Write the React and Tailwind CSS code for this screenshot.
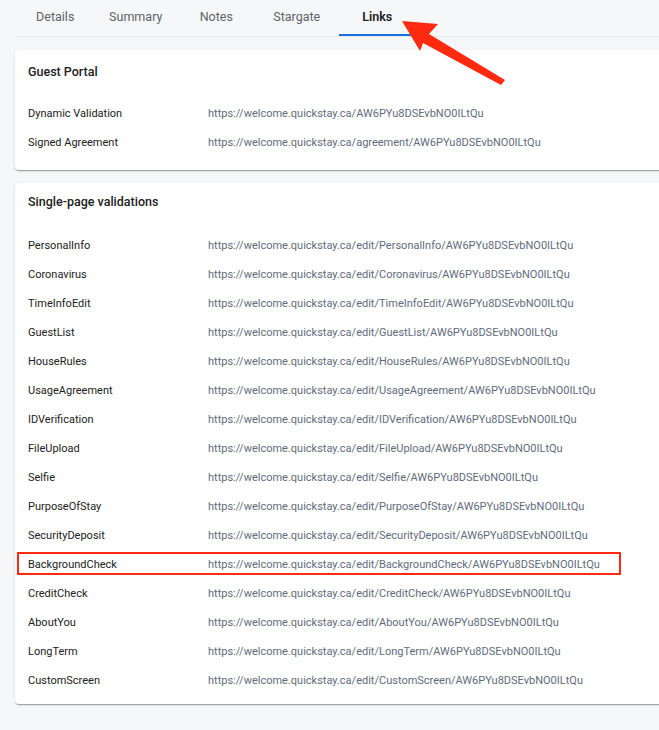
import React from "react";

const ID = "AW6PYu8DSEvbNO0ILtQu";
const BASE = "https://welcome.quickstay.ca";

const TABS = ["Details", "Summary", "Notes", "Stargate", "Links"];

const PORTAL = [
  { label: "Dynamic Validation", url: `${BASE}/${ID}` },
  { label: "Signed Agreement", url: `${BASE}/agreement/${ID}` },
];

const SCREENS = [
  "PersonalInfo",
  "Coronavirus",
  "TimeInfoEdit",
  "GuestList",
  "HouseRules",
  "UsageAgreement",
  "IDVerification",
  "FileUpload",
  "Selfie",
  "PurposeOfStay",
  "SecurityDeposit",
  "BackgroundCheck",
  "CreditCheck",
  "AboutYou",
  "LongTerm",
  "CustomScreen",
];

function Row({ label, url, marked }) {
  return (
    <div className="relative flex items-center h-[29px]">
      <div className="w-[180px] shrink-0 text-[11px] text-[#212121]">{label}</div>
      <div className="text-[11px] text-[#5f6b7c]">{url}</div>
      {marked && (
        <div className="absolute left-[-11px] top-[1px] w-[604px] h-[23px] border-[2.5px] border-[#ff2a10] pointer-events-none" />
      )}
    </div>
  );
}

function Card({ title, children, className = "" }) {
  return (
    <div
      className={`bg-white rounded-[4px] mr-[-20px] pl-[13px] shadow-[0_2px_1px_-1px_rgba(0,0,0,0.2),0_1px_1px_0_rgba(0,0,0,0.14),0_1px_3px_0_rgba(0,0,0,0.12)] ${className}`}
    >
      <div className="h-[20px] leading-[20px] text-[12.5px] font-medium text-[#212121]">{title}</div>
      {children}
    </div>
  );
}

export default function App() {
  return (
    <div
      className="relative min-h-[730px] w-[659px] overflow-hidden bg-[#f6f7f9]"
      style={{ fontFamily: "Roboto, 'Liberation Sans', sans-serif" }}
    >
      <div className="pl-[15px]">
        {/* tabs */}
        <div className="flex h-[37px] border-b border-[#e6e8eb]">
          {TABS.map((t) => {
            const active = t === "Links";
            return (
              <div
                key={t}
                className={`relative w-[80.5px] flex items-start justify-center pt-[8px] text-[12.5px] ${
                  active ? "font-semibold text-[#202124]" : "text-[#5f6368]"
                }`}
              >
                {t}
                {active && <div className="absolute left-[2px] right-[-2px] bottom-0 h-[2px] bg-[#1a6fe0]" />}
              </div>
            );
          })}
        </div>

        <div className="pt-[13px] flex flex-col gap-[13px] pb-[26px]">
          <Card title="Guest Portal" className="pt-[12px] pb-[12px]">
            <div className="mt-[18px]">
              {PORTAL.map((r) => (
                <Row key={r.label} {...r} />
              ))}
            </div>
          </Card>

          <Card title="Single-page validations" className="pt-[9px] pb-[8px]">
            <div className="mt-[20px]">
              {SCREENS.map((s) => (
                <Row
                  key={s}
                  label={s}
                  url={`${BASE}/edit/${s}/${ID}`}
                  marked={s === "BackgroundCheck"}
                />
              ))}
            </div>
          </Card>
        </div>
      </div>

      {/* annotation arrow */}
      <svg className="absolute left-0 top-0 pointer-events-none" width="659" height="100" viewBox="0 0 659 100">
        <polygon
          points="402,21 438,24 429,34 505,80 501,85 423,43 420,51"
          fill="#ff2a10"
        />
      </svg>
    </div>
  );
}
